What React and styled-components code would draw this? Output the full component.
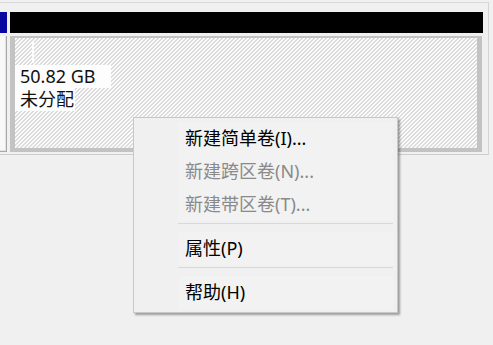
import React from 'react';
import styled, { createGlobalStyle } from 'styled-components';

const menuItems = [
  { label: '新建简单卷(I)...', disabled: false },
  { label: '新建跨区卷(N)...', disabled: true },
  { label: '新建带区卷(T)...', disabled: true },
  { separator: true },
  { label: '属性(P)', disabled: false },
  { separator: true },
  { label: '帮助(H)', disabled: false },
];

const GlobalStyle = createGlobalStyle`
  html, body {
    margin: 0;
    padding: 0;
    background: #f0f0f0;
    width: 493px;
    height: 345px;
    overflow: hidden;
  }
  body {
    font-family: "Noto Sans", "Noto Sans CJK SC", sans-serif;
    font-size: 18px;
  }
`;

const Root = styled.div`
  position: relative;
  width: 493px;
  height: 345px;
  padding-top: 2px;
  box-sizing: border-box;
`;

const DiskPanel = styled.div`
  width: 489px;
  box-sizing: border-box;
  border-top: 1px solid #d9d9d9;
  border-right: 1px solid #d4d4d4;
  border-bottom: 1px solid #cdcdcd;
  padding: 9px 5px 2px 0;
`;

const DiskRow = styled.div`
  display: flex;
  gap: 3px;
  height: 140px;
`;

const Column = styled.div`
  display: flex;
  flex-direction: column;
  gap: 3px;
  width: ${props => props.width}px;
`;

const Header = styled.div`
  height: 21px;
  flex: none;
  background: ${props => props.color};
`;

const InfoBox = styled.div`
  flex: 1;
  background: #f8f8f8;
  border-right: 1px solid #a8a8a8;
  border-bottom: 1px solid #a8a8a8;
  box-shadow: inset -1px -1px 0 #e2e2e2;
`;

const Frame = styled.div`
  flex: 1;
  width: 472px;
  box-sizing: border-box;
  background: #c3c3c3;
  padding: 2px 5px 4px 5px;
  display: flex;
`;

const Hatched = styled.div`
  flex: 1;
  padding-top: 4px;
  background-color: #fbfbfb;
  background-image: linear-gradient(
    135deg,
    #fbfbfb 0%,
    #fbfbfb 32%,
    #dcdcdc 32%,
    #dcdcdc 50%,
    #fbfbfb 50%,
    #fbfbfb 82%,
    #dcdcdc 82%,
    #dcdcdc 100%
  );
  background-size: 4px 4px;
`;

const LabelLine = styled.div`
  height: 23px;
  line-height: 23px;
  color: #111;
  white-space: nowrap;
`;

const LabelText = styled.span`
  display: inline-block;
  height: 23px;
  background: #fdfdfd;
  padding: 0 ${props => props.padRight || 0}px 0 5px;
`;

const BlankMark = styled.span`
  display: inline-block;
  height: 21px;
  width: 2px;
  margin-left: 17px;
  background: #fdfdfd;
`;

const Menu = styled.div`
  position: absolute;
  left: 133px;
  top: 117px;
  width: 265px;
  box-sizing: border-box;
  background: #f0f0f0;
  border: 1px solid #c8c8c8;
  box-shadow: 2px 2px 2px rgba(0, 0, 0, 0.35);
  padding: 4px 0 3px 0;
`;

const MenuItem = styled.div`
  height: 33px;
  line-height: 33px;
  margin: 0 4px 0 44px;
  padding-left: 7px;
  background: #f2f2f2;
  color: ${props => (props.disabled ? '#8a8a8a' : '#000')};
  white-space: nowrap;
`;

const Separator = styled.div`
  height: 1px;
  margin: 2px 4px 8px 44px;
  background: #d9d9d9;
`;

const App = () => (
  <Root>
    <GlobalStyle />
    <DiskPanel>
      <DiskRow>
        <Column width={7}>
          <Header color="#0808a0" />
          <InfoBox />
        </Column>
        <Column width={473}>
          <Header color="#000" />
          <Frame>
            <Hatched>
              <LabelLine>
                <BlankMark />
              </LabelLine>
              <LabelLine>
                <LabelText padRight={15}>50.82 GB</LabelText>
              </LabelLine>
              <LabelLine>
                <LabelText padRight={1}>未分配</LabelText>
              </LabelLine>
            </Hatched>
          </Frame>
        </Column>
      </DiskRow>
    </DiskPanel>

    <Menu>
      {menuItems.map((item, i) =>
        item.separator ? (
          <Separator key={i} />
        ) : (
          <MenuItem key={i} disabled={item.disabled}>
            {item.label}
          </MenuItem>
        )
      )}
    </Menu>
  </Root>
);

export default App;
